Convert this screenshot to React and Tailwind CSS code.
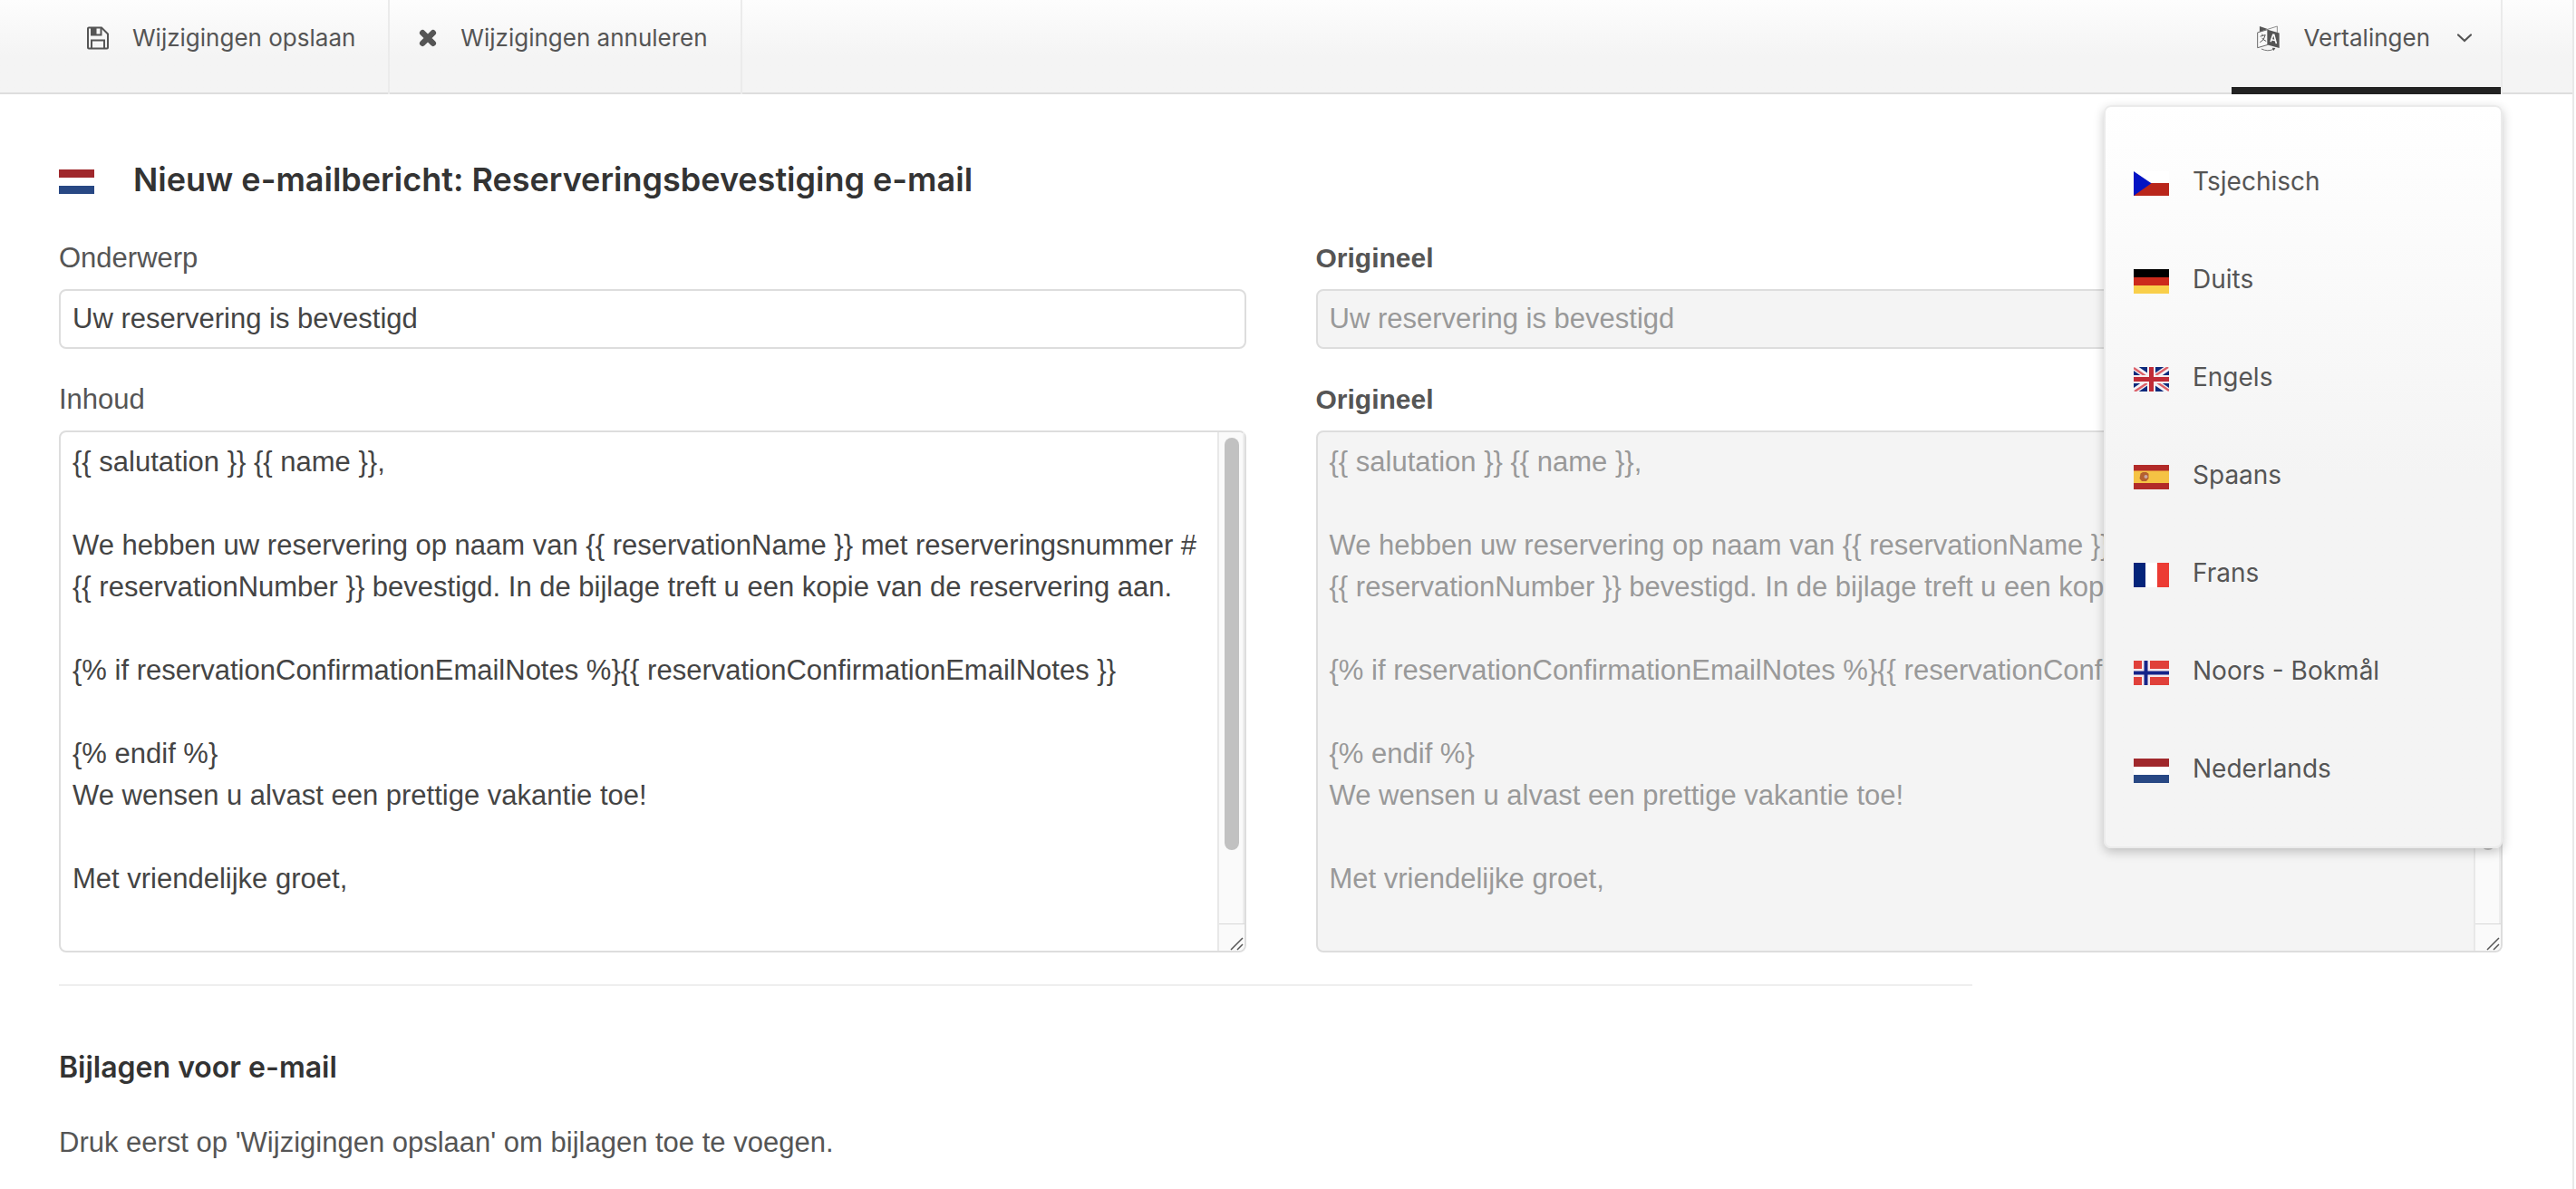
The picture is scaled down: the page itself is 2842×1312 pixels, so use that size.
import React from 'react';

const BODY = `{{ salutation }} {{ name }},

We hebben uw reservering op naam van {{ reservationName }} met reserveringsnummer #
{{ reservationNumber }} bevestigd. In de bijlage treft u een kopie van de reservering aan.

{% if reservationConfirmationEmailNotes %}{{ reservationConfirmationEmailNotes }}

{% endif %}
We wensen u alvast een prettige vakantie toe!

Met vriendelijke groet,
`;

const FLAGS = {
  cz: (
    <>
      <rect width="39" height="13.5" fill="#fff" />
      <rect y="13" width="39" height="14" fill="#b9261b" />
      <path d="M0 0 19.5 13.3 0 27Z" fill="#0414c4" />
    </>
  ),
  de: (
    <>
      <rect width="39" height="9" fill="#000" />
      <rect y="9" width="39" height="9" fill="#cc2a1c" />
      <rect y="18" width="39" height="9" fill="#f9cf4a" />
    </>
  ),
  gb: (
    <>
      <rect width="39" height="27" fill="#0c2a7c" />
      <path d="M0 0 39 27M39 0 0 27" stroke="#f4f2f6" strokeWidth="6.5" />
      <path d="M0 1 19 14M39 26 20 13M38 0 20 12M1 27 19 15" stroke="#dc6068" strokeWidth="2.4" />
      <path d="M19.5 0V27M0 13.5H39" stroke="#f6eef0" strokeWidth="9" />
      <path d="M19.5 0V27M0 13.5H39" stroke="#c02a36" strokeWidth="5" />
    </>
  ),
  es: (
    <>
      <rect width="39" height="27" fill="#b22a28" />
      <rect y="6.5" width="39" height="13.5" fill="#f5c344" />
      <path d="M7.5 9.5 10 8h4l2.5 1.8V15L14 18H9L6.5 15Z" fill="#b4602e" />
      <circle cx="13.5" cy="13" r="2" fill="#c9a6a4" />
    </>
  ),
  fr: (
    <>
      <rect width="13" height="27" fill="#04247a" />
      <rect x="13" width="13" height="27" fill="#fff" />
      <rect x="26" width="13" height="27" fill="#ec3b34" />
    </>
  ),
  no: (
    <>
      <rect width="39" height="27" fill="#e0403a" />
      <path d="M13.5 0V27M0 13.5H39" stroke="#f4e8ec" strokeWidth="9" />
      <path d="M13.5 0V27M0 13.5H39" stroke="#14248a" strokeWidth="4" />
    </>
  ),
  nl: (
    <>
      <rect width="39" height="9" fill="#a0282c" />
      <rect y="9" width="39" height="9" fill="#fff" />
      <rect y="18" width="39" height="9" fill="#284884" />
    </>
  ),
};

const LANGUAGES = [
  ['cz', 'Tsjechisch'],
  ['de', 'Duits'],
  ['gb', 'Engels'],
  ['es', 'Spaans'],
  ['fr', 'Frans'],
  ['no', 'Noors - Bokmål'],
  ['nl', 'Nederlands'],
];

function Flag({ code }) {
  return (
    <svg viewBox="0 0 39 27" className="mt-1 h-[27px] w-[39px] shrink-0" aria-hidden="true">
      {FLAGS[code]}
    </svg>
  );
}

function SaveIcon() {
  return (
    <svg viewBox="0 0 24 26" className="h-[26px] w-6 shrink-0" aria-hidden="true">
      <path d="M1 2.5Q1 1.5 2 1.5H16L23 8.5V23.5Q23 24.5 22 24.5H2Q1 24.5 1 23.5Z" fill="none" stroke="#555" strokeWidth="2" />
      <path d="M5 1.5V9.5H15.5V1.5" fill="none" stroke="#555" strokeWidth="2" />
      <path d="M5 1.5H10.5V9.5H5Z" fill="#555" />
      <path d="M5 24.5V15.5H19V24.5" fill="none" stroke="#555" strokeWidth="2" />
    </svg>
  );
}

function CancelIcon() {
  return (
    <svg viewBox="0 0 20 20" className="h-5 w-5 shrink-0" aria-hidden="true">
      <path d="M4.2 4.2 15.8 15.8M15.8 4.2 4.2 15.8" stroke="#555" strokeWidth="6.5" strokeLinecap="round" />
    </svg>
  );
}

function TranslateIcon() {
  return (
    <svg viewBox="0 0 76 88" className="h-[29px] w-[25px] shrink-0" fill="none" aria-hidden="true">
      <path d="M9 3 36 12 9 22Z" fill="#555" />
      <path d="M36 13 68 3V24" stroke="#777" strokeWidth="2.5" />
      <path d="M2 24 36 14V65L2 75Z" stroke="#666" strokeWidth="3" fill="#fafafa" />
      <path d="M36 14 75 26V76L36 65Z" fill="#555" />
      <path d="M11 37 28 32Q25 50 10 57M17 29 20 34M17 42Q22 50 31 53" stroke="#555" strokeWidth="3" />
      <path d="M46 55 54 31 57 31 65 61M49 48 62 51" stroke="#fff" strokeWidth="5" />
      <path d="M15 79Q36 89 56 80" stroke="#777" strokeWidth="3" />
      <path d="M51 75 62 76 56 85Z" fill="#555" />
    </svg>
  );
}

function ScrollTrack() {
  return (
    <div
      className="flex w-[30px] shrink-0 flex-col rounded-r-md border-l-2 border-[#e8e8e8] bg-[#fafafa]"
      aria-hidden="true"
    >
      <div className="flex flex-1 flex-col border-r-2 border-[#ededed] pt-1.5 pr-1 pl-1.5">
        <div className="h-[455px] w-4 rounded-full bg-[#c1c1c1]" />
      </div>
      <div className="h-[30px] border-t border-[#d8d8d8]">
        <svg viewBox="0 0 28 29" className="h-[29px] w-7" fill="none">
          <path d="M13 28 26 15M20 28 26 22" stroke="#555" strokeWidth="1.5" />
        </svg>
      </div>
    </div>
  );
}

function Column({ id, subjectLabel, bodyLabel, original }) {
  const label = original
    ? 'block text-[30px] leading-[46px] font-bold text-[#555]'
    : 'block text-[31px] leading-[46px] text-[#555]';
  const tone = original ? 'bg-[#f4f4f4] text-[#999]' : 'bg-white text-[#444]';
  return (
    <div className="min-w-0">
      <label htmlFor={id + '-subject'} className={label}>
        {subjectLabel}
      </label>
      <input
        id={id + '-subject'}
        type="text"
        defaultValue="Uw reservering is bevestigd"
        readOnly={original}
        className={'mt-[11px] block h-[66px] w-full rounded-lg border-2 border-[#ddd] px-[13px] text-[31px] outline-none ' + tone}
      />
      <label htmlFor={id + '-body'} className={'mt-[33px] ' + label}>
        {bodyLabel}
      </label>
      <div className={'mt-[11px] flex rounded-lg border-2 border-[#ddd] ' + tone}>
        <textarea
          id={id + '-body'}
          rows={12}
          defaultValue={BODY}
          readOnly={original}
          className="block h-[572px] min-w-0 flex-1 resize-none overflow-hidden bg-transparent py-2.5 pl-[13px] text-[31px] leading-[46px] outline-none"
        />
        <ScrollTrack />
      </div>
    </div>
  );
}

export default function App() {
  return (
    <div className="mr-0.5 min-h-screen border-r-2 border-[#e8e8e8] bg-white font-['Liberation_Sans',Arial,sans-serif] text-[#555]">
      <header className="flex h-[104px] items-stretch bg-linear-to-b from-[#fdfdfd] to-[#f4f4f4] to-60% pr-[77px] pl-16 font-[Inter,sans-serif] text-[26px] leading-8 shadow-[inset_0_-2px_#ddd]">
        <button type="button" className="flex items-center gap-[26px] border-r-2 border-[#ebebeb] pr-9 pb-5 pl-8">
          <SaveIcon />
          Wijzigingen opslaan
        </button>
        <button type="button" className="flex items-center gap-[26px] border-r-2 border-[#ebebeb] pr-9 pb-5 pl-8">
          <CancelIcon />
          Wijzigingen annuleren
        </button>
        <div className="relative ml-auto flex border-r-2 border-[#ebebeb]">
          <button
            type="button"
            aria-haspopup="menu"
            aria-expanded="true"
            className="flex items-center gap-[26px] border-b-8 border-[#222] pr-8 pb-3 pl-7"
          >
            <TranslateIcon />
            Vertalingen
            <svg viewBox="0 0 16 10" className="ml-1 h-2.5 w-4 shrink-0" fill="none" aria-hidden="true">
              <path d="M1 1.5 8 8 15 1.5" stroke="#555" strokeWidth="2.2" strokeLinecap="round" />
            </svg>
          </button>
          <ul
            role="menu"
            className="absolute top-full -right-0.5 z-10 mt-3 w-[440px] rounded-lg border-2 border-[#ebebeb] bg-linear-to-b from-white to-[#f4f4f4] to-50% pt-7 pb-8 text-[28px] shadow-[0_4px_12px_rgba(0,0,0,0.22)]"
          >
            {LANGUAGES.map(([code, name]) => (
              <li key={code} role="none">
                <button type="button" role="menuitem" className="flex h-[108px] w-full items-center gap-[26px] px-[31px]">
                  <Flag code={code} />
                  {name}
                </button>
              </li>
            ))}
          </ul>
        </div>
      </header>

      <main className="pt-[74px] pr-[77px] pb-6 pl-[65px]">
        <h1 className="flex items-center gap-[43px] font-[Inter,sans-serif] text-[36px] leading-10 font-semibold text-[#333]">
          <Flag code="nl" />
          Nieuw e-mailbericht: Reserveringsbevestiging e-mail
        </h1>
        <form className="mt-11 grid grid-cols-2 gap-[77px]">
          <Column id="translation" subjectLabel="Onderwerp" bodyLabel="Inhoud" />
          <Column id="original" subjectLabel="Origineel" bodyLabel="Origineel" original />
        </form>
        <hr className="mt-[35px] w-[78.3%] border-t-2 border-[#eee]" />
        <h2 className="mt-[70px] font-[Inter,sans-serif] text-[32px] leading-10 font-semibold text-[#333]">
          Bijlagen voor e-mail
        </h2>
        <p className="mt-10 text-[31px] leading-[46px]">
          Druk eerst op 'Wijzigingen opslaan' om bijlagen toe te voegen.
        </p>
      </main>
    </div>
  );
}
